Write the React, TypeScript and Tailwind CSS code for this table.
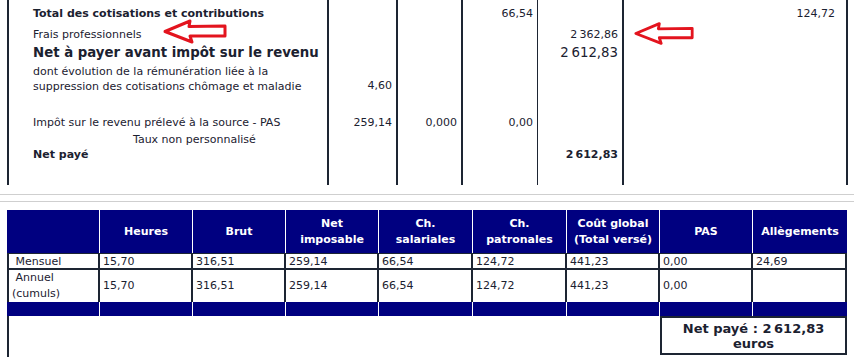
import React from "react";

const rule = "border-[#1d2533]";

type TopRowProps = {
  h: string;
  label?: React.ReactNode;
  cells?: (string | undefined)[];
  numClass?: string;
  end?: boolean;
};

// one line of the upper block: label column + 5 amount columns
const TopRow = ({ h, label, cells = [], numClass = "text-[11px]", end }: TopRowProps) => {
  const align = end ? "items-end" : "items-center";
  return (
    <div className={`grid grid-cols-[320px_69px_65px_76px_85px_226px] ${h}`}>
      <div className={`border-l-2 ${rule} pl-[24px] flex ${align}`}>{label}</div>
      <div className={`border-l-2 ${rule} pr-[4px] flex justify-end ${align} ${numClass}`}>{cells[0]}</div>
      <div className={`border-l-2 ${rule} pr-[4px] flex justify-end ${align} ${numClass}`}>{cells[1]}</div>
      <div className={`border-l-2 ${rule} pr-[4px] flex justify-end ${align} ${numClass}`}>{cells[2]}</div>
      <div className={`border-l ${rule} pr-[4px] flex justify-end ${align} ${numClass}`}>{cells[3]}</div>
      <div className={`border-l-2 border-r-2 ${rule} pr-[11px] flex justify-end ${align} ${numClass}`}>{cells[4]}</div>
    </div>
  );
};

const Arrow = ({ className, w, h }: { className: string; w: number; h: number }) => (
  <svg className={className} width={w} height={h} viewBox="0 0 66 25">
    <polygon
      points="3,12.5 28,2 27,7.5 63,7 63,17 28,17 30,23"
      fill="none"
      stroke="#e3141e"
      strokeWidth="3"
      strokeLinejoin="round"
    />
  </svg>
);

const headers: string[][] = [
  [],
  ["Heures"],
  ["Brut"],
  ["Net", "imposable"],
  ["Ch.", "salariales"],
  ["Ch.", "patronales"],
  ["Coût global", "(Total versé)"],
  ["PAS"],
  ["Allègements"],
];

const mensuel = ["\u00a0Mensuel", "15,70", "316,51", "259,14", "66,54", "124,72", "441,23", "0,00", "24,69"];
const annuel = ["", "15,70", "316,51", "259,14", "66,54", "124,72", "441,23", "0,00", ""];

const cols = "grid grid-cols-[93px_93px_93px_93px_94px_94px_93px_93px_94px]";

const App = () => {
  return (
    <div className="relative w-[854px] h-[357px] overflow-hidden bg-white text-[#1b2130] font-['DejaVu_Sans',sans-serif]">
      {/* bloc du haut */}
      <div className="ml-[7px] text-[11px]">
        <TopRow h="h-[4px]" />
        <TopRow
          h="h-[20px]"
          label={<span className="font-bold">Total des cotisations et contributions</span>}
          cells={[undefined, undefined, "66,54", undefined, "124,72"]}
        />
        <TopRow
          h="h-[22px]"
          label="Frais professionnels"
          cells={[undefined, undefined, undefined, "2\u202f362,86"]}
        />
        <TopRow
          h="h-[14px]"
          label={<span className="font-bold text-[13.3px] leading-none">Net à payer avant impôt sur le revenu</span>}
          cells={[undefined, undefined, undefined, "2\u202f612,83"]}
          numClass="text-[13.3px] leading-none"
        />
        <TopRow
          h="h-[34px]"
          end
          label={
            <span className="leading-[15px]">
              dont évolution de la rémunération liée à la
              <br />
              suppression des cotisations chômage et maladie
            </span>
          }
          cells={["4,60"]}
        />
        <TopRow h="h-[20px]" />
        <TopRow
          h="h-[18px]"
          label="Impôt sur le revenu prélevé à la source - PAS"
          cells={["259,14", "0,000", "0,00"]}
        />
        <TopRow h="h-[14px]" label={<span className="pl-[100px]">Taux non personnalisé</span>} />
        <TopRow
          h="h-[18px]"
          label={<span className="font-bold">Net payé</span>}
          cells={[undefined, undefined, undefined, "2\u202f612,83"]}
          numClass="text-[11px] font-bold"
        />
        <TopRow h="h-[21px]" />
      </div>

      <div className="h-[9px]" />
      <div className="h-px bg-[#cfcfcf]" />
      <div className="h-[6px]" />
      <div className="h-px bg-[#cfcfcf]" />
      <div className="h-[8px]" />

      {/* tableau récapitulatif */}
      <div className="ml-[7px] w-[840px] text-[11px]">
        <div className={`${cols} h-[43px] overflow-hidden`}>
          {headers.map((lines, i) => (
            <div
              key={i}
              className={`bg-[#000080] text-white font-bold leading-[16px] flex flex-col items-center justify-center text-center ${
                i < 8 ? "border-r border-white" : ""
              }`}
            >
              {lines.map((l) => (
                <span key={l}>{l}</span>
              ))}
            </div>
          ))}
        </div>
        <div className={`${cols} h-[17px]`}>
          {mensuel.map((t, i) => (
            <div
              key={i}
              className={`border-r-2 border-b-2 border-t ${rule} ${i === 0 ? "border-l-2" : ""} pl-[3px] flex items-center leading-none`}
            >
              {t}
            </div>
          ))}
        </div>
        <div className={`${cols} h-[32px]`}>
          {annuel.map((t, i) => (
            <div
              key={i}
              className={`border-r-2 border-b-2 ${rule} ${i === 0 ? "border-l-2" : ""} pl-[3px] flex items-center`}
            >
              {i === 0 ? (
                <span className="leading-[16px]">
                  {"\u00a0Annuel"}
                  <br />
                  (cumuls)
                </span>
              ) : (
                t
              )}
            </div>
          ))}
        </div>
        <div className={`${cols} h-[14px]`}>
          {headers.map((_, i) => (
            <div key={i} className={`bg-[#000080] ${i < 8 ? "border-r border-white" : ""}`} />
          ))}
        </div>
        <div className="flex h-[41px]">
          <div className={`w-[653px] border-l-2 ${rule}`} />
          <div
            className={`w-[187px] h-[39px] border-2 ${rule} flex items-center justify-center text-center font-bold text-[13px] leading-[15px]`}
          >
            Net payé : 2{"\u202f"}612,83
            <br />
            euros
          </div>
        </div>
      </div>

      <Arrow className="absolute left-[161px] top-[19px]" w={68} h={25} />
      <Arrow className="absolute left-[633px] top-[20px]" w={62} h={27} />
    </div>
  );
};

export default App;
